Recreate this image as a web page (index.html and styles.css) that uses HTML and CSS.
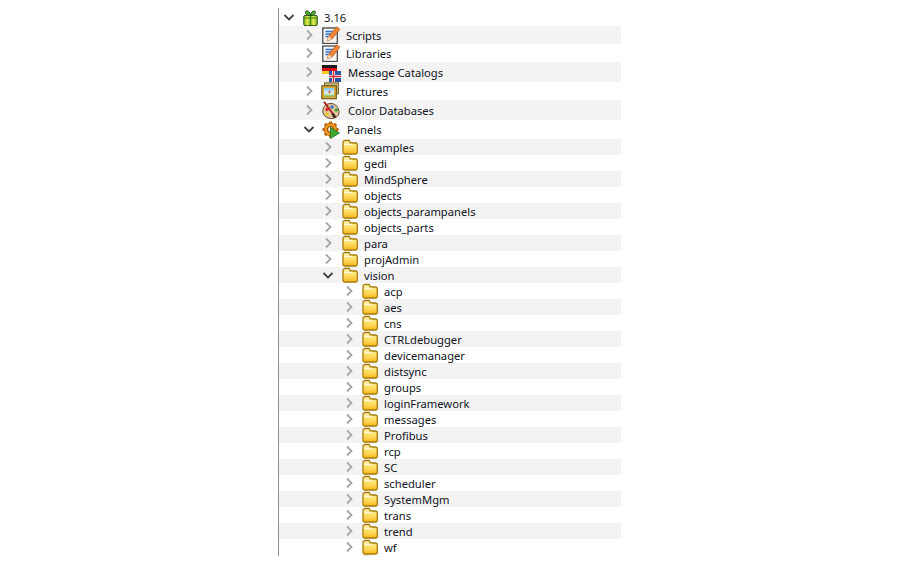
FILE: index.html
```html
<!DOCTYPE html>
<html lang="en">
<head>
<meta charset="utf-8">
<title>Project tree</title>
<link rel="stylesheet" href="styles.css">
</head>
<body>
<svg class="defs" width="0" height="0" aria-hidden="true">
  <defs>
    <linearGradient id="fg" x1="0" y1="0" x2="0" y2="1">
      <stop offset="0" stop-color="#fff6c4"/>
      <stop offset=".5" stop-color="#fedf66"/>
      <stop offset="1" stop-color="#f5b91e"/>
    </linearGradient>
    <linearGradient id="sky" x1="0" y1="0" x2="0" y2="1">
      <stop offset="0" stop-color="#7cc4ee"/>
      <stop offset=".6" stop-color="#e3f2f5"/>
      <stop offset="1" stop-color="#7fbf4a"/>
    </linearGradient>
    <symbol id="chev-r" viewBox="0 0 9 12"><path d="M2 1.500 6.500 6 2 10.500" fill="none" stroke="#a6a6a6" stroke-width="1.800"/></symbol>
    <symbol id="chev-d" viewBox="0 0 12 9"><path d="M1.500 2 6 6.500 10.500 2" fill="none" stroke="#404040" stroke-width="1.800"/></symbol>
    <symbol id="folder" viewBox="0 0 16 16">
      <path d="M1 3.500V13a2 2 0 0 0 2 2H13.500A1.800 1.800 0 0 0 15.300 13.200V6A2 2 0 0 0 13.300 4H8.500L7 1.500H3A2 2 0 0 0 1 3.500Z" fill="url(#fg)" stroke="#a87a08" stroke-width="1.300"/>
      <path d="M2 5.500H8.500L9.500 4.800" fill="none" stroke="#fffbe0"/>
    </symbol>
    <symbol id="gift" viewBox="0 0 15 16">
      <rect x=".8" y="5.500" width="13.400" height="10" rx="1" fill="#a5d12e" stroke="#173f10"/>
      <path d="M4.500 5.500V15.500M10.500 5.500V15.500" stroke="#ecea58" stroke-width="1.800"/>
      <path d="M7.500 5.500V15.500" stroke="#3f8a1c" stroke-width="1.200"/>
      <path d="M1 8H14" stroke="#3f7d1c"/>
      <path d="M7.500 5.500C4.500 5.500 2 4 2.500 2S6.500 .5 7.500 5C8.500 .5 12 .5 12.500 2S10.500 5.500 7.500 5.500Z" fill="#4fb52a" stroke="#173f10"/>
    </symbol>
    <symbol id="script" viewBox="0 0 18 18">
      <rect x=".8" y="2" width="14.500" height="15.500" fill="#f4f4f4" stroke="#4a4a4a" stroke-width="1.300"/>
      <path d="M3.500 5.500H11M3.500 8H9.500M3.500 10.500H7.500" stroke="#2f74c8" stroke-width="1.400"/>
      <path d="M5 15 6.500 10.500 14.500 .8 18 3.300 10 13Z" fill="#f0863a" stroke="#b9521a" stroke-width=".8"/>
      <path d="M5 15 6.500 10.500 10 13Z" fill="#f8dcb4"/>
    </symbol>
    <symbol id="flags" viewBox="0 0 19 18">
      <rect x="0" y="1" width="15" height="3" fill="#1a1a1a"/>
      <rect x="0" y="4" width="15" height="3" fill="#d8141a"/>
      <rect x="0" y="7" width="15" height="3" fill="#f6cc1e"/>
      <rect x="7" y="7" width="12" height="11" fill="#2a57a5"/>
      <path d="M7 12.500H19M11.500 7V18" stroke="#fff" stroke-width="3"/>
      <path d="M7 12.500H19M11.500 7V18" stroke="#d8242c" stroke-width="1.400"/>
    </symbol>
    <symbol id="picture" viewBox="0 0 18 18">
      <rect x="3.500" y=".8" width="14" height="11" fill="#c7b27a" stroke="#7e6a2d"/>
      <rect x=".8" y="3.800" width="14.500" height="13" fill="#d8a93a" stroke="#5f4a10"/>
      <rect x="3" y="6" width="10" height="8.500" fill="url(#sky)"/>
      <path d="M7 11 8.500 8 10 11Z" fill="#d9534a"/>
    </symbol>
    <symbol id="palette" viewBox="0 0 18 18">
      <path d="M9 2.500C4 2.500 .8 6 .8 10S4.500 17.500 9.500 17.500 17.500 14 17 10.500 14 2.500 9 2.500Z" fill="#e3c79a" stroke="#5b4022"/>
      <circle cx="5" cy="8.500" r="1.700" fill="#d8262c"/>
      <circle cx="10" cy="6" r="1.700" fill="#2a6fd0"/>
      <circle cx="14.200" cy="9" r="1.700" fill="#3aa63a"/>
      <circle cx="5" cy="13" r="1.700" fill="#f2c81e"/>
      <path d="M2 .8 11 13" stroke="#b3161c" stroke-width="1.800"/>
      <path d="M10.500 12.500 13 16.500" stroke="#33261a" stroke-width="2.600"/>
    </symbol>
    <symbol id="gear" viewBox="0 0 18 18">
      <path d="M8.500 .5V16.500M.5 8.500H16.500M2.900 2.900 14.100 14.100M14.100 2.900 2.900 14.100" stroke="#b9660a" stroke-width="3"/>
      <circle cx="8.500" cy="8.500" r="6.300" fill="#f09a1e" stroke="#b9660a"/>
      <circle cx="8.500" cy="8.500" r="3" fill="#fdf3dc" stroke="#8a4e08" stroke-width="1.200"/>
      <path d="M8.500 6.500 17.500 12 8.500 17.500Z" fill="#3cab2f" stroke="#1d6b1c" stroke-width=".8"/>
    </symbol>
  </defs>
</svg>
<main class="tree">
  <div class="row h18 l0"><svg class="chev down"><use href="#chev-d"/></svg><svg class="ic gift"><use href="#gift"/></svg><span class="lb m6">3.16</span></div>
  <div class="row h18 l1 alt"><svg class="chev"><use href="#chev-r"/></svg><svg class="ic big"><use href="#script"/></svg><span class="lb m6">Scripts</span></div>
  <div class="row h18 l1"><svg class="chev"><use href="#chev-r"/></svg><svg class="ic big"><use href="#script"/></svg><span class="lb m6">Libraries</span></div>
  <div class="row h20 l1 alt"><svg class="chev"><use href="#chev-r"/></svg><svg class="ic big wide"><use href="#flags"/></svg><span class="lb m7">Message Catalogs</span></div>
  <div class="row h18 l1"><svg class="chev"><use href="#chev-r"/></svg><svg class="ic big shift-l"><use href="#picture"/></svg><span class="lb m7">Pictures</span></div>
  <div class="row h20 l1 alt"><svg class="chev"><use href="#chev-r"/></svg><svg class="ic big"><use href="#palette"/></svg><span class="lb m8">Color Databases</span></div>
  <div class="row h19 l1"><svg class="chev down"><use href="#chev-d"/></svg><svg class="ic big"><use href="#gear"/></svg><span class="lb m7">Panels</span></div>
  <div class="row l2 alt"><svg class="chev"><use href="#chev-r"/></svg><svg class="ic fold"><use href="#folder"/></svg><span class="lb">examples</span></div>
  <div class="row l2"><svg class="chev"><use href="#chev-r"/></svg><svg class="ic fold"><use href="#folder"/></svg><span class="lb">gedi</span></div>
  <div class="row l2 alt"><svg class="chev"><use href="#chev-r"/></svg><svg class="ic fold"><use href="#folder"/></svg><span class="lb">MindSphere</span></div>
  <div class="row l2"><svg class="chev"><use href="#chev-r"/></svg><svg class="ic fold"><use href="#folder"/></svg><span class="lb">objects</span></div>
  <div class="row l2 alt"><svg class="chev"><use href="#chev-r"/></svg><svg class="ic fold"><use href="#folder"/></svg><span class="lb">objects_parampanels</span></div>
  <div class="row l2"><svg class="chev"><use href="#chev-r"/></svg><svg class="ic fold"><use href="#folder"/></svg><span class="lb">objects_parts</span></div>
  <div class="row l2 alt"><svg class="chev"><use href="#chev-r"/></svg><svg class="ic fold"><use href="#folder"/></svg><span class="lb">para</span></div>
  <div class="row l2"><svg class="chev"><use href="#chev-r"/></svg><svg class="ic fold"><use href="#folder"/></svg><span class="lb">projAdmin</span></div>
  <div class="row l2 alt"><svg class="chev down"><use href="#chev-d"/></svg><svg class="ic fold"><use href="#folder"/></svg><span class="lb">vision</span></div>
  <div class="row l3"><svg class="chev"><use href="#chev-r"/></svg><svg class="ic fold"><use href="#folder"/></svg><span class="lb">acp</span></div>
  <div class="row l3 alt"><svg class="chev"><use href="#chev-r"/></svg><svg class="ic fold"><use href="#folder"/></svg><span class="lb">aes</span></div>
  <div class="row l3"><svg class="chev"><use href="#chev-r"/></svg><svg class="ic fold"><use href="#folder"/></svg><span class="lb">cns</span></div>
  <div class="row l3 alt"><svg class="chev"><use href="#chev-r"/></svg><svg class="ic fold"><use href="#folder"/></svg><span class="lb">CTRLdebugger</span></div>
  <div class="row l3"><svg class="chev"><use href="#chev-r"/></svg><svg class="ic fold"><use href="#folder"/></svg><span class="lb">devicemanager</span></div>
  <div class="row l3 alt"><svg class="chev"><use href="#chev-r"/></svg><svg class="ic fold"><use href="#folder"/></svg><span class="lb">distsync</span></div>
  <div class="row l3"><svg class="chev"><use href="#chev-r"/></svg><svg class="ic fold"><use href="#folder"/></svg><span class="lb">groups</span></div>
  <div class="row l3 alt"><svg class="chev"><use href="#chev-r"/></svg><svg class="ic fold"><use href="#folder"/></svg><span class="lb">loginFramework</span></div>
  <div class="row l3"><svg class="chev"><use href="#chev-r"/></svg><svg class="ic fold"><use href="#folder"/></svg><span class="lb">messages</span></div>
  <div class="row l3 alt"><svg class="chev"><use href="#chev-r"/></svg><svg class="ic fold"><use href="#folder"/></svg><span class="lb">Profibus</span></div>
  <div class="row l3"><svg class="chev"><use href="#chev-r"/></svg><svg class="ic fold"><use href="#folder"/></svg><span class="lb">rcp</span></div>
  <div class="row l3 alt"><svg class="chev"><use href="#chev-r"/></svg><svg class="ic fold"><use href="#folder"/></svg><span class="lb">SC</span></div>
  <div class="row l3"><svg class="chev"><use href="#chev-r"/></svg><svg class="ic fold"><use href="#folder"/></svg><span class="lb">scheduler</span></div>
  <div class="row l3 alt"><svg class="chev"><use href="#chev-r"/></svg><svg class="ic fold"><use href="#folder"/></svg><span class="lb">SystemMgm</span></div>
  <div class="row l3"><svg class="chev"><use href="#chev-r"/></svg><svg class="ic fold"><use href="#folder"/></svg><span class="lb">trans</span></div>
  <div class="row l3 alt"><svg class="chev"><use href="#chev-r"/></svg><svg class="ic fold"><use href="#folder"/></svg><span class="lb">trend</span></div>
  <div class="row l3"><svg class="chev"><use href="#chev-r"/></svg><svg class="ic fold"><use href="#folder"/></svg><span class="lb">wf</span></div>
  <div class="row l3"><svg class="chev"><use href="#chev-r"/></svg><svg class="ic fold"><use href="#folder"/></svg></div>
</main>
</body>
</html>
```
FILE: styles.css
```css
html, body {
  margin: 0;
  padding: 0;
  background: #fff;
  height: 100%;
  overflow: hidden;
}
body {
  padding: 8px 0 0 278px;
  box-sizing: border-box;
  font-family: "Noto Sans", "Open Sans", sans-serif;
  font-size: 11.2px;
  color: #10121c;
}
.defs { display: block; height: 0; }
.tree {
  width: 342px;
  height: 548px;
  border-left: 1px solid #8c8c8c;
  overflow: hidden;
}
.row {
  display: flex;
  align-items: center;
  height: 16px;
  white-space: nowrap;
}
.alt { background: #f3f3f3; }
.h18 { height: 18px; }
.h19 { height: 19px; }
.h20 { height: 20px; }
.l0 { padding-left: 6px; }
.l1 { padding-left: 26px; }
.l2 { padding-left: 45px; }
.l3 { padding-left: 66px; }
.chev { flex: none; width: 9px; height: 12px; }
.chev.down { width: 12px; height: 9px; margin-left: -2px; margin-right: -1px; }
.ic { flex: none; }
.gift { width: 15px; height: 16px; margin: 2px 0 0 9px; }
.big { width: 18px; height: 18px; margin-left: 8px; }
.big.wide { width: 19px; margin-top: 2px; }
.big.shift-l { margin-left: 7px; }
.fold { width: 16px; height: 16px; margin-left: 8px; }
.l2 .fold { margin-left: 9px; }
.lb { margin-left: 6px; line-height: 16px; padding-top: 1px; }
.m6 { margin-left: 6px; }
.m7 { margin-left: 7px; }
.m8 { margin-left: 8px; }
```
